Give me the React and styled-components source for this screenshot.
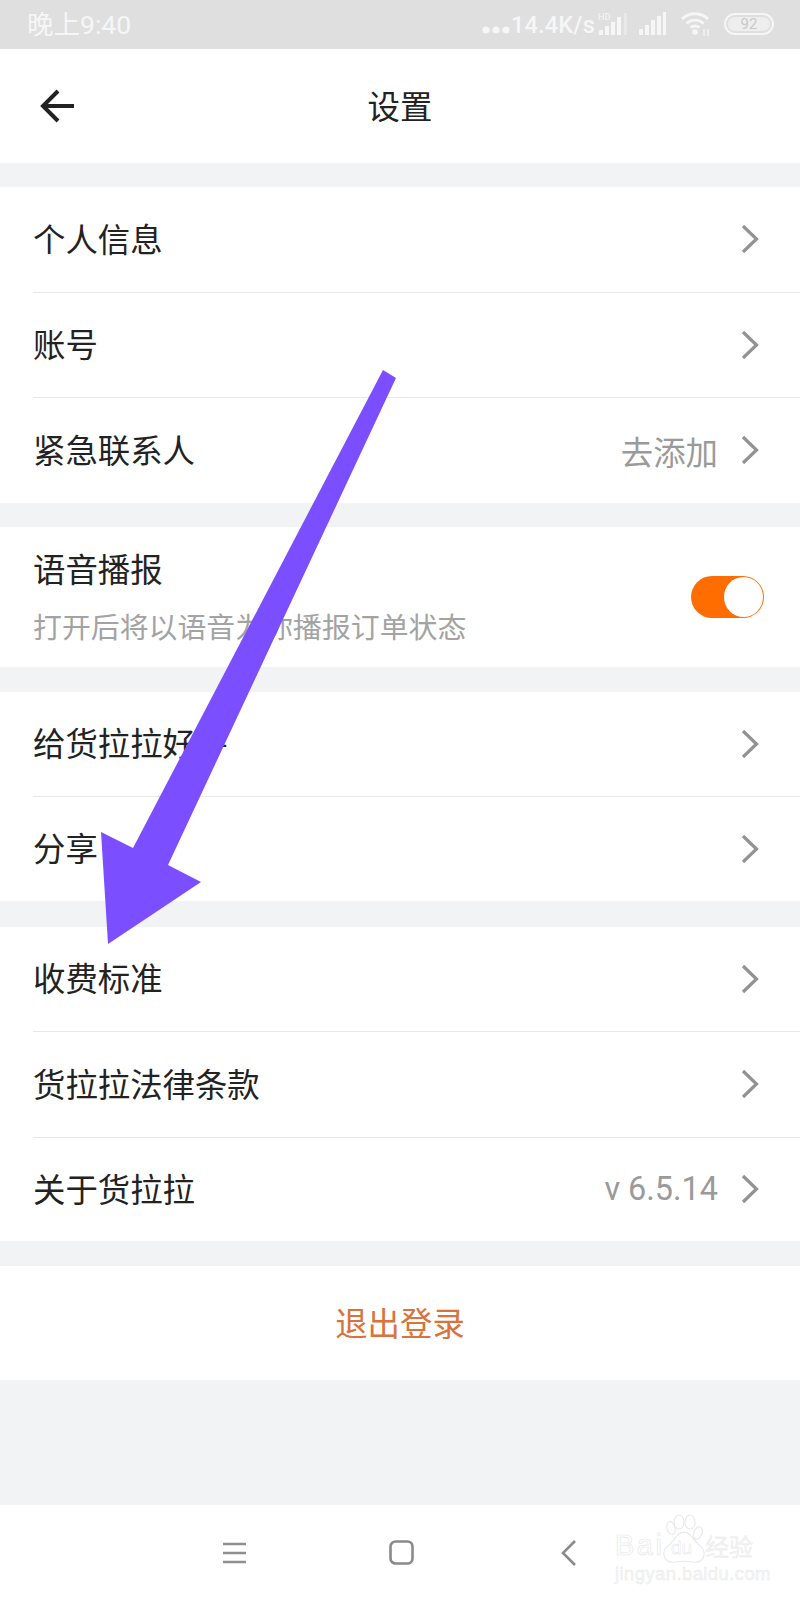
import React from 'react';
import styled, { createGlobalStyle } from 'styled-components';

const GlobalStyle = createGlobalStyle`
  html, body {
    margin: 0;
    padding: 0;
    background: #f2f3f5;
  }
  * {
    box-sizing: border-box;
  }
`;

const Page = styled.div`
  position: relative;
  width: 800px;
  height: 1600px;
  overflow: hidden;
  display: flex;
  flex-direction: column;
  background: #f2f3f5;
  color: #222;
  font-family: "Liberation Sans", "Noto Sans CJK SC", sans-serif;
`;

const StatusBar = styled.div`
  height: 49px;
  flex: none;
  display: flex;
  align-items: center;
  justify-content: space-between;
  padding: 0 26px 1px 27px;
  background: #dfdfdf;
  color: #f6f6f6;
`;

const Clock = styled.span`
  font-family: "Roboto", "Noto Sans CJK SC", sans-serif;
  font-size: 26.5px;
  line-height: 30px;
  margin-top: 1px;
`;

const StatusIcons = styled.div`
  display: flex;
  align-items: center;
`;

const Speed = styled.span`
  font-family: "Roboto", sans-serif;
  font-size: 23.5px;
  font-weight: 500;
  line-height: 28px;
  margin: 1px 3px 0 0;
  letter-spacing: 0.2px;
`;

const Battery = styled.div`
  width: 50px;
  height: 22px;
  margin-left: 12px;
  border: 2px solid #f6f6f6;
  border-radius: 11px;
  padding: 2px;
  display: flex;
  font-family: "Roboto", sans-serif;
  font-size: 15px;
`;

const BatteryFill = styled.div`
  flex: 1;
  border-radius: 7px;
  background: #eeeeee;
  color: #c9c9c9;
  display: flex;
  align-items: center;
  justify-content: center;
  line-height: 1;
`;

const Header = styled.header`
  height: 114px;
  flex: none;
  display: flex;
  align-items: center;
  justify-content: center;
  position: relative;
  background: #fff;
`;

const BackButton = styled.svg`
  position: absolute;
  left: 39px;
  top: 39px;
`;

const Title = styled.h1`
  margin: -3px 0 0;
  font-size: 32.4px;
  font-weight: 400;
`;

const Group = styled.section`
  flex: none;
  margin-top: ${(p) => p.$gap || 24}px;
  background: #fff;
`;

const Row = styled.div`
  height: ${(p) => p.$height || 105}px;
  padding-left: 33px;
  display: flex;
`;

const RowInner = styled.div`
  flex: 1;
  display: flex;
  align-items: center;
  justify-content: space-between;
  padding: 2px 42px 0 0;
  border-bottom: ${(p) => (p.$last ? 'none' : '1px solid #e8e8e8')};
`;

const Label = styled.span`
  font-size: 32.4px;
  line-height: 44px;
`;

const Hint = styled.div`
  font-size: 28.9px;
  line-height: 40px;
  margin-top: 15px;
  color: #a3a3a3;
`;

const Right = styled.div`
  display: flex;
  align-items: center;
  gap: 24px;
  margin-top: -3px;
`;

const Value = styled.span`
  font-size: 32.4px;
  color: #9a9a9a;
  font-family: "Roboto", "Noto Sans CJK SC", sans-serif;
`;

const Switch = styled.div`
  width: 73px;
  height: 42px;
  margin: -2px -6px 0 0;
  padding: 1px;
  border-radius: 21px;
  background: #ff6d00;
  display: flex;
  justify-content: flex-end;
`;

const Knob = styled.div`
  width: 39px;
  height: 40px;
  border-radius: 50%;
  background: #fff;
`;

const Logout = styled.div`
  height: 114px;
  padding-bottom: 3px;
  display: flex;
  align-items: center;
  justify-content: center;
  font-size: 32.4px;
  color: #d8733b;
`;

const Spacer = styled.div`
  flex: 1;
`;

const NavBar = styled.nav`
  height: 95px;
  flex: none;
  background: #fff;
  display: flex;
  align-items: center;
  padding: 0 0 0 223px;
  gap: 142px;
`;

const Overlay = styled.svg`
  position: absolute;
  left: 0;
  top: 0;
  pointer-events: none;
`;

const Watermark = styled.div`
  position: absolute;
  left: 612px;
  top: 1514px;
  width: 146px;
  height: 70px;
  color: #fff;
  -webkit-text-stroke: 0.7px #e8e8e8;
`;

const WatermarkBai = styled.span`
  position: absolute;
  left: 3px;
  top: 16px;
  font-size: 29px;
  line-height: 30px;
  letter-spacing: 2.5px;
`;

const WatermarkDu = styled.span`
  position: absolute;
  left: 59px;
  top: 24px;
  font-size: 19px;
  line-height: 20px;
  -webkit-text-stroke: 0.5px #e6e6e6;
`;

const WatermarkCn = styled.span`
  position: absolute;
  left: 93px;
  top: 20px;
  font-size: 24px;
  line-height: 28px;
  white-space: nowrap;
  color: #f3f3f3;
  -webkit-text-stroke: 0.3px #e8e8e8;
`;

const WatermarkUrl = styled.span`
  position: absolute;
  left: 3px;
  top: 50px;
  font-size: 18.5px;
  line-height: 20px;
  white-space: nowrap;
  letter-spacing: 0.4px;
  color: #f6f6f6;
  -webkit-text-stroke: 0.4px #e8e8e8;
`;

const Chevron = () => (
  <svg width="18" height="30" viewBox="0 0 18 30" fill="none" style={{ margin: '0 -1px' }}>
    <path d="M2 2 L15.5 15 L2 28" stroke="#929292" strokeWidth="3.2" />
  </svg>
);

const Bars = () => (
  <svg width="30" height="24" viewBox="0 0 30 24" fill="#f6f6f6">
    <rect x="1" y="17" width="4" height="6" />
    <rect x="7" y="13" width="4" height="10" />
    <rect x="13" y="8" width="4" height="15" />
    <rect x="19" y="4" width="4" height="19" />
    <rect x="25" y="0" width="3" height="23" />
  </svg>
);

const MenuRow = ({ label, value, last, height }) => (
  <Row $height={height}>
    <RowInner $last={last}>
      <Label>{label}</Label>
      <Right>
        {value && <Value>{value}</Value>}
        <Chevron />
      </Right>
    </RowInner>
  </Row>
);

export default function App() {
  return (
    <Page>
      <GlobalStyle />
      <StatusBar>
        <Clock>晚上9:40</Clock>
        <StatusIcons>
          <svg width="28" height="8" viewBox="0 0 28 8" fill="#f6f6f6" style={{ marginTop: 11, marginRight: 1 }}>
            <circle cx="4" cy="4" r="3.6" />
            <circle cx="14" cy="4" r="3.6" />
            <circle cx="24" cy="4" r="3.6" />
          </svg>
          <Speed>14.4K/s</Speed>
          <svg width="30" height="24" viewBox="0 0 30 24" fill="#f6f6f6">
            <text x="0" y="8" fontSize="9" fontFamily="Roboto, sans-serif">HD</text>
            <rect x="1" y="18" width="4" height="5" />
            <rect x="7" y="14" width="4" height="9" />
            <rect x="13" y="10" width="4" height="13" />
            <rect x="19" y="5" width="4" height="18" />
            <rect x="26" y="1" width="3" height="22" opacity="0.45" />
          </svg>
          <span style={{ width: 10 }} />
          <Bars />
          <svg width="32" height="26" viewBox="0 0 32 26" fill="none" stroke="#f6f6f6" strokeWidth="2.8" style={{ marginLeft: 12 }}>
            <path d="M2 8 C9 1 21 1 28 8" />
            <path d="M6.5 12.5 C11 8 19 8 23.5 12.5" />
            <path d="M10.5 16.5 C13 14.5 17 14.5 19.5 16.5" />
            <circle cx="15" cy="21" r="2.8" fill="#f6f6f6" stroke="none" />
            <path d="M24 25 V18 M28 25 V18" strokeWidth="1.4" />
          </svg>
          <Battery>
            <BatteryFill>92</BatteryFill>
          </Battery>
        </StatusIcons>
      </StatusBar>

      <Header>
        <BackButton width="36" height="36" viewBox="0 0 36 36" fill="none" stroke="#222" strokeWidth="4">
          <path d="M19 3 L4 18 L19 33 M4 18 H35" />
        </BackButton>
        <Title>设置</Title>
      </Header>

      <Group>
        <MenuRow label="个人信息" height={106} />
        <MenuRow label="账号" />
        <MenuRow label="紧急联系人" value="去添加" last />
      </Group>

      <Group>
        <Row $height={140}>
          <RowInner $last>
            <div>
              <Label>语音播报</Label>
              <Hint>打开后将以语音为你播报订单状态</Hint>
            </div>
            <Switch>
              <Knob />
            </Switch>
          </RowInner>
        </Row>
      </Group>

      <Group $gap={25}>
        <MenuRow label="给货拉拉好评" />
        <MenuRow label="分享" height={104} last />
      </Group>

      <Group $gap={26}>
        <MenuRow label="收费标准" />
        <MenuRow label="货拉拉法律条款" height={106} />
        <MenuRow label="关于货拉拉" value="v 6.5.14" height={103} last />
      </Group>

      <Group $gap={25}>
        <Logout>退出登录</Logout>
      </Group>

      <Spacer />

      <NavBar>
        <svg width="24" height="22" viewBox="0 0 24 22" fill="none" stroke="#8f8f8f" strokeWidth="2.4">
          <path d="M0 2 H23 M0 11 H23 M0 20 H23" />
        </svg>
        <svg width="25" height="25" viewBox="0 0 25 25" fill="none" stroke="#8a8a8a" strokeWidth="2.6">
          <rect x="1.5" y="1.5" width="22" height="22" rx="5" />
        </svg>
        <svg width="16" height="26" viewBox="0 0 16 26" fill="none" stroke="#8a8a8a" strokeWidth="2.6" style={{ marginLeft: 5 }}>
          <path d="M14 1 L2 13 L14 25" />
        </svg>
      </NavBar>

      <Watermark>
        <svg width="146" height="52" viewBox="0 0 146 52" fill="#fff" stroke="#e8e8e8" strokeWidth="1.1" style={{ position: 'absolute', left: 0, top: 0 }}>
          <ellipse cx="59" cy="14" rx="4" ry="6.5" transform="rotate(-15 59 14)" />
          <ellipse cx="67" cy="8" rx="5" ry="7" />
          <ellipse cx="78" cy="8" rx="5" ry="7" />
          <ellipse cx="86" cy="19" rx="4" ry="6.5" transform="rotate(20 86 19)" />
          <path d="M72 18 C79 18 81 26 87 31 C96 37 93 50 80 48 C75 47 69 47 64 48 C51 50 48 37 57 31 C63 26 65 18 72 18 Z" />
        </svg>
        <WatermarkBai>Bai</WatermarkBai>
        <WatermarkDu>du</WatermarkDu>
        <WatermarkCn>经验</WatermarkCn>
        <WatermarkUrl>jingyan.baidu.com</WatermarkUrl>
      </Watermark>

      {/* annotation arrow drawn on top of the screenshot */}
      <Overlay width="800" height="1600" viewBox="0 0 800 1600">
        <polygon
          points="383,370 396,378 168,865 201,882 108,944 101,832 133,848"
          fill="#7b4fff"
        />
      </Overlay>
    </Page>
  );
}
